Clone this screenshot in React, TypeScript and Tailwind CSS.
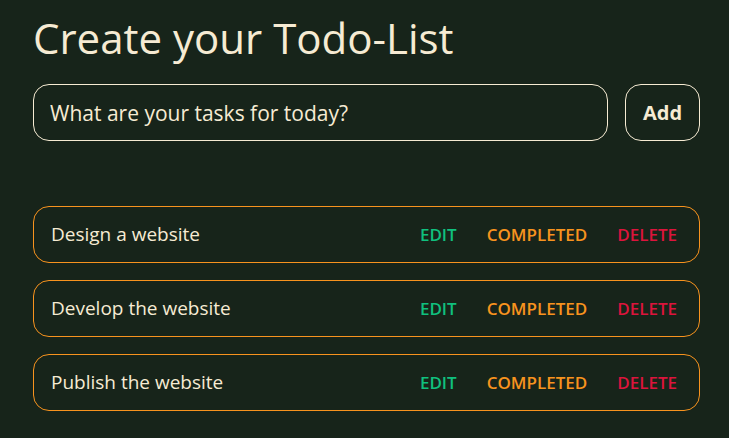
import React, { useState } from 'react';

const todos = ['Design a website', 'Develop the website', 'Publish the website'];

const App = () => {
  const [task, setTask] = useState('');

  return (
    <div
      className="min-h-screen w-full bg-[#17241a] text-[#f6ebd3]"
      style={{ fontFamily: '"Open Sans", "DejaVu Sans", sans-serif' }}
    >
      <div className="ml-[33px] w-[667px] pt-[10px]">
        <h1 className="text-[42px] leading-[56px]">Create your Todo-List</h1>

        <div className="mt-[18px] flex gap-[17px]">
          <input
            value={task}
            onChange={(e) => setTask(e.target.value)}
            placeholder="What are your tasks for today?"
            className="h-[57px] flex-1 rounded-2xl border border-[#f6ebd3] bg-transparent px-4 text-[21px] text-[#f6ebd3] outline-none placeholder:text-[#f6ebd3]"
          />
          <button className="h-[57px] w-[75px] rounded-2xl border border-[#f6ebd3] text-[20px] font-bold">
            Add
          </button>
        </div>

        <ul className="mt-[65px] flex flex-col gap-[17px]">
          {todos.map((t) => (
            <li
              key={t}
              className="flex h-[57px] items-center justify-between rounded-2xl border border-[#f7931e] pl-[17px] pr-[22px]"
            >
              <span className="text-[19px]">{t}</span>
              <div className="flex items-center gap-[30px] text-[17px] font-semibold">
                <button className="text-[#10c07e]">EDIT</button>
                <button className="text-[#f7931e]">COMPLETED</button>
                <button className="text-[#dc143c]">DELETE</button>
              </div>
            </li>
          ))}
        </ul>
      </div>
    </div>
  );
};

export default App;
